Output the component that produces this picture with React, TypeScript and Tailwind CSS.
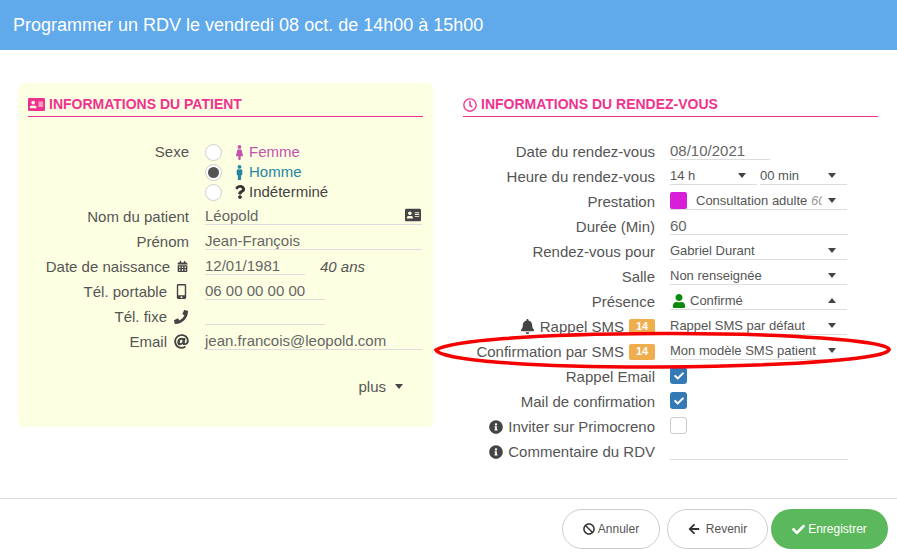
import type { ReactNode } from "react";
import {
  FaAddressCard,
  FaArrowLeft,
  FaAt,
  FaBan,
  FaBell,
  FaCalendarAlt,
  FaCheck,
  FaFemale,
  FaInfoCircle,
  FaMale,
  FaMobileAlt,
  FaPhoneAlt,
  FaQuestion,
  FaRegClock,
  FaUser,
} from "react-icons/fa";

function Caret({ up = false }: { up?: boolean }) {
  return (
    <svg width="8" height="5" viewBox="0 0 8 5" className="shrink-0 fill-[#444]">
      <path d={up ? "M0 5 4 0 8 5Z" : "M0 0 8 0 4 5Z"} />
    </svg>
  );
}

function SectionTitle({ icon, children }: { icon: ReactNode; children: ReactNode }) {
  return (
    <div className="flex h-[24px] items-center gap-[4px] border-b border-[#f0328f] text-[14px] font-bold text-[#f0328f]">
      {icon}
      {children}
    </div>
  );
}

function Field({ label, width, children }: { label: ReactNode; width: string; children: ReactNode }) {
  return (
    <div className="flex h-[25px] items-start">
      <div className={`${width} flex shrink-0 items-center justify-end gap-[5px] text-right leading-[23px] text-[#555]`}>
        {label}
      </div>
      {children}
    </div>
  );
}

function Input({ value, className }: { value?: string; className: string }) {
  return (
    <div className={`${className} h-[20px] whitespace-nowrap border-b border-[#ddd] leading-[22px] text-[#666]`}>{value}</div>
  );
}

function Select({ children, up, className = "w-[177px]" }: { children: ReactNode; up?: boolean; className?: string }) {
  return (
    <div className={`${className} flex h-[20px] items-center justify-between border-b border-[#ddd] pr-[11px] pt-[2px] text-[13px] text-[#555]`}>
      <div className="flex items-center overflow-hidden whitespace-nowrap">{children}</div>
      <Caret up={up} />
    </div>
  );
}

function Badge() {
  return (
    <span className="flex h-[16px] w-[26px] items-center justify-center rounded-[2px] bg-[#f0ad4e] text-[11px] font-bold text-white">
      14
    </span>
  );
}

function Check({ checked }: { checked: boolean }) {
  return checked ? (
    <div className="flex h-[17px] w-[17px] items-center justify-center rounded-[3px] bg-[#337ab7] text-white">
      <FaCheck size={10} />
    </div>
  ) : (
    <div className="h-[17px] w-[17px] rounded-[3px] border border-[#ccc] bg-white" />
  );
}

function Radio({ checked }: { checked?: boolean }) {
  return (
    <div className="flex h-[17px] w-[17px] items-center justify-center rounded-full border border-[#ccc] bg-white">
      {checked && <div className="h-[11px] w-[11px] rounded-full bg-[#555]" />}
    </div>
  );
}

function Sex({ checked, icon, label, color }: { checked?: boolean; icon: ReactNode; label: string; color: string }) {
  return (
    <div className={`${color} flex h-[20px] items-center`}>
      <Radio checked={checked} />
      <span className="flex w-[27px] justify-center pl-[8px]">{icon}</span>
      {label}
    </div>
  );
}

function LabelIcon({ children }: { children: ReactNode }) {
  return <span className="ml-[1px] flex w-[16px] justify-center text-[#444]">{children}</span>;
}

export default function App() {
  return (
    <div className="relative flex h-[559px] w-[897px] flex-col overflow-hidden bg-white font-['Liberation_Sans',sans-serif] text-[15px]">
      <header className="flex h-[50px] items-center bg-[#60a9ea] pl-[13px] text-[18px] text-white">
        Programmer un RDV le vendredi 08 oct. de 14h00 à 15h00
      </header>

      <main className="flex h-[448px] items-start gap-[30px] pl-[18px] pt-[33px]">
        <section className="h-[344px] w-[415px] rounded-[6px] bg-[#fdffe3] px-[10px] pt-[10px]">
          <SectionTitle icon={<FaAddressCard size={17} />}>INFORMATIONS DU PATIENT</SectionTitle>
          <div className="mt-[25px] flex h-[60px]">
            <div className="w-[161px] text-right leading-[20px] text-[#555]">Sexe</div>
            <div className="ml-[16px]">
              <Sex color="text-[#c553ad]" icon={<FaFemale size={15} />} label="Femme" />
              <Sex color="text-[#26869f]" checked icon={<FaMale size={15} />} label="Homme" />
              <Sex color="text-[#444]" icon={<FaQuestion size={14} className="text-[#333]" />} label="Indéterminé" />
            </div>
          </div>
          <div className="mt-[3px]">
            <Field width="w-[161px]" label="Nom du patient">
              <div className="relative ml-[16px] w-[217px]">
                <Input value="Léopold" className="w-full" />
                <FaAddressCard size={16} className="absolute right-[1px] top-[2px] text-[#444]" />
              </div>
            </Field>
            <Field width="w-[161px]" label="Prénom">
              <Input value="Jean-François" className="ml-[16px] w-[217px]" />
            </Field>
            <Field
              width="w-[161px]"
              label={
                <>
                  Date de naissance
                  <span className="ml-[1px] mr-[1px] flex w-[12px] justify-center text-[#444]">
                    <FaCalendarAlt size={11} />
                  </span>
                </>
              }
            >
              <div className="ml-[16px] flex items-start">
                <Input value="12/01/1981" className="w-[100px]" />
                <span className="ml-[15px] leading-[23px] italic text-[#555]">40 ans</span>
              </div>
            </Field>
            <Field
              width="w-[161px]"
              label={
                <>
                  Tél. portable
                  <LabelIcon>
                    <FaMobileAlt size={15} />
                  </LabelIcon>
                </>
              }
            >
              <Input value="06 00 00 00 00" className="ml-[16px] w-[120px]" />
            </Field>
            <Field
              width="w-[161px]"
              label={
                <>
                  Tél. fixe
                  <LabelIcon>
                    <FaPhoneAlt size={14} className="-scale-x-100" />
                  </LabelIcon>
                </>
              }
            >
              <Input className="ml-[16px] w-[120px]" />
            </Field>
            <Field
              width="w-[161px]"
              label={
                <>
                  Email
                  <LabelIcon>
                    <FaAt size={15} />
                  </LabelIcon>
                </>
              }
            >
              <Input value="jean.francois@leopold.com" className="ml-[16px] w-[217px]" />
            </Field>
          </div>
          <div className="mt-[20px] flex items-center justify-end gap-[9px] pr-[20px] leading-[23px] text-[#555]">
            plus <Caret />
          </div>
        </section>

        <section className="w-[415px] pt-[10px]">
          <SectionTitle icon={<FaRegClock size={14} />}>INFORMATIONS DU RENDEZ-VOUS</SectionTitle>
          <div className="mt-[23px]">
            <Field width="w-[192px]" label="Date du rendez-vous">
              <Input value="08/10/2021" className="ml-[15px] w-[100px]" />
            </Field>
            <Field width="w-[192px]" label="Heure du rendez-vous">
              <div className="ml-[15px] flex gap-[3px]">
                <Select className="w-[87px]">14 h</Select>
                <Select className="w-[87px]">00 min</Select>
              </div>
            </Field>
            <Field width="w-[192px]" label="Prestation">
              <div className="ml-[15px]">
                <Select>
                  <span className="mr-[9px] h-[17px] w-[17px] shrink-0 rounded-[2px] bg-[#d91ed9]" />
                  <span className="w-[126px] overflow-hidden">
                    Consultation adulte <i className="text-[#999]">60 min</i>
                  </span>
                </Select>
              </div>
            </Field>
            <Field width="w-[192px]" label="Durée (Min)">
              <Input value="60" className="ml-[15px] w-[178px]" />
            </Field>
            <Field width="w-[192px]" label="Rendez-vous pour">
              <div className="ml-[15px]">
                <Select>Gabriel Durant</Select>
              </div>
            </Field>
            <Field width="w-[192px]" label="Salle">
              <div className="ml-[15px]">
                <Select>Non renseignée</Select>
              </div>
            </Field>
            <Field width="w-[192px]" label="Présence">
              <div className="ml-[15px]">
                <Select up>
                  <FaUser size={14} className="ml-[2px] mr-[4px] text-[#0a8a0a]" />
                  Confirmé
                </Select>
              </div>
            </Field>
            <Field
              width="w-[192px]"
              label={
                <>
                  <FaBell size={15} className="text-[#444]" /> Rappel SMS <Badge />
                </>
              }
            >
              <div className="ml-[15px]">
                <Select>Rappel SMS par défaut</Select>
              </div>
            </Field>
            <Field
              width="w-[192px]"
              label={
                <>
                  Confirmation par SMS <Badge />
                </>
              }
            >
              <div className="ml-[15px]">
                <Select>Mon modèle SMS patient</Select>
              </div>
            </Field>
            <Field width="w-[192px]" label="Rappel Email">
              <div className="ml-[15px] pt-[2px]">
                <Check checked />
              </div>
            </Field>
            <Field width="w-[192px]" label="Mail de confirmation">
              <div className="ml-[15px] pt-[2px]">
                <Check checked />
              </div>
            </Field>
            <Field
              width="w-[192px]"
              label={
                <>
                  <FaInfoCircle size={14} className="text-[#444]" /> Inviter sur Primocreno
                </>
              }
            >
              <div className="ml-[15px] pt-[2px]">
                <Check checked={false} />
              </div>
            </Field>
            <Field
              width="w-[192px]"
              label={
                <>
                  <FaInfoCircle size={14} className="text-[#444]" /> Commentaire du RDV
                </>
              }
            >
              <Input className="ml-[15px] w-[178px]" />
            </Field>
          </div>
        </section>
      </main>

      <footer className="flex h-[61px] items-start justify-end border-t border-[#ddd] pr-[9px] pt-[10px] text-[12px]">
        <button className="flex h-[40px] w-[98px] items-center justify-center gap-[3px] rounded-[20px] border border-[#ccc] bg-white text-[#555]">
          <FaBan size={12} className="text-[#333]" /> Annuler
        </button>
        <button className="ml-[7px] flex h-[40px] w-[101px] items-center justify-center gap-[6px] rounded-[20px] border border-[#ccc] bg-white text-[#555]">
          <FaArrowLeft size={12} className="text-[#333]" /> Revenir
        </button>
        <button className="ml-[3px] flex h-[40px] w-[117px] items-center justify-center gap-[3px] rounded-[20px] bg-[#5cb85c] text-white">
          <FaCheck size={13} /> Enregistrer
        </button>
      </footer>

      <svg width="897" height="559" className="pointer-events-none absolute left-0 top-0">
        <path
          d="M436 350C450 341 530 334 660 333.500C790 333 884 341 889 349C892 358 800 366 660 367C530 367.500 440 360 436 350Z"
          fill="none"
          stroke="#f50000"
          strokeWidth="3.500"
        />
      </svg>
    </div>
  );
}
